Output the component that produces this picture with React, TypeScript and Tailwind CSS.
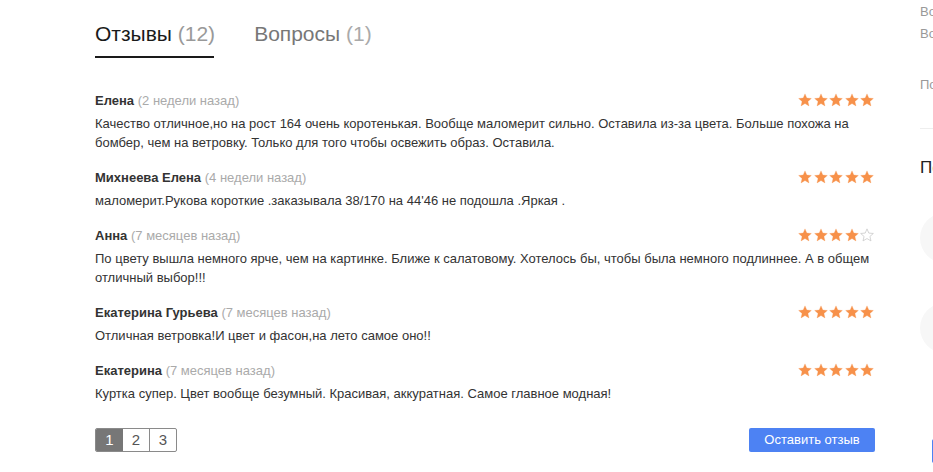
import React from "react";

const reviews = [
  {
    name: "Елена",
    date: "2 недели назад",
    rating: 5,
    text: "Качество отличное,но на рост 164 очень коротенькая. Вообще маломерит сильно. Оставила из-за цвета. Больше похожа на бомбер, чем на ветровку. Только для того чтобы освежить образ. Оставила.",
  },
  {
    name: "Михнеева Елена",
    date: "4 недели назад",
    rating: 5,
    text: "маломерит.Рукова короткие .заказывала 38/170 на 44'46 не подошла .Яркая .",
  },
  {
    name: "Анна",
    date: "7 месяцев назад",
    rating: 4,
    text: "По цвету вышла немного ярче, чем на картинке. Ближе к салатовому. Хотелось бы, чтобы была немного подлиннее. А в общем отличный выбор!!!",
  },
  {
    name: "Екатерина Гурьева",
    date: "7 месяцев назад",
    rating: 5,
    text: "Отличная ветровка!И цвет и фасон,на лето самое оно!!",
  },
  {
    name: "Екатерина",
    date: "7 месяцев назад",
    rating: 5,
    text: "Куртка супер. Цвет вообще безумный. Красивая, аккуратная. Самое главное модная!",
  },
];

function Star({ filled }: { filled: boolean }) {
  return (
    <svg width="14" height="14" viewBox="0 0 24 24">
      <path
        d="M12 1.5l3.1 7.2 7.8.7-5.9 5.1 1.8 7.6L12 18.1l-6.8 4 1.8-7.6-5.9-5.1 7.8-.7z"
        fill={filled ? "#f7914a" : "none"}
        stroke={filled ? "#f7914a" : "#c8c8c8"}
        strokeWidth={filled ? 0.5 : 1.3}
        strokeLinejoin="round"
      />
    </svg>
  );
}

function Stars({ rating }: { rating: number }) {
  return (
    <div className="flex gap-[1.5px]">
      {[0, 1, 2, 3, 4].map((i) => (
        <Star key={i} filled={i < rating} />
      ))}
    </div>
  );
}

export default function App() {
  return (
    <div
      className="w-[933px] h-[472px] overflow-hidden bg-white flex text-[#333]"
      style={{ fontFamily: '"Liberation Sans", Arial, sans-serif' }}
    >
      <div className="w-[780px] ml-[95px] shrink-0 flex flex-col">
        <div className="flex gap-[39px] pt-[20px] text-[21px] leading-[28px]">
          <div className="flex flex-col">
            <div className="text-[#1a1a1a] pb-[8px]">
              Отзывы <span className="text-[#999]">(12)</span>
            </div>
            <div className="h-[2px] bg-[#1a1a1a] w-[119px]" />
          </div>
          <div className="text-[#777]">
            Вопросы <span className="text-[#aaa]">(1)</span>
          </div>
        </div>

        <div className="flex flex-col gap-[16px] mt-[33px]">
          {reviews.map((r, i) => (
            <div key={i} className="flex flex-col">
              <div className="flex justify-between items-center h-[20px]">
                <div className="text-[13px]">
                  <span className="font-bold text-[#333]">{r.name}</span>{" "}
                  <span className="text-[#aaa]">({r.date})</span>
                </div>
                <div className="mr-[1px] -mt-[2px]">
                  <Stars rating={r.rating} />
                </div>
              </div>
              <div className="text-[13px] leading-[19px] mt-[3px] text-[#333]">
                {r.text}
              </div>
            </div>
          ))}
        </div>

        <div className="flex justify-between items-center mt-[25px]">
          <div className="flex border border-[#8a8a8a] rounded-[2px] overflow-hidden text-[15px] h-[24px]">
            <div className="w-[27px] flex items-center justify-center bg-[#777] text-white">1</div>
            <div className="w-[27px] flex items-center justify-center text-[#555] border-r border-[#8a8a8a]">2</div>
            <div className="w-[26px] flex items-center justify-center text-[#555]">3</div>
          </div>
          <div className="w-[126px] h-[24px] rounded-[2px] bg-[#4d82f3] text-white text-[13px] flex items-center justify-center">
            Оставить отзыв
          </div>
        </div>
      </div>

      <div className="ml-[45px] w-[200px] shrink-0 flex flex-col text-[13px] text-[#999]">
        <div className="mt-[1px] leading-[22px]">Вопросы</div>
        <div className="leading-[22px]">Вопросы</div>
        <div className="mt-[29px] leading-[22px]">Поделиться</div>
        <div className="mt-[32px] h-px bg-[#eee]" />
        <div className="mt-[28px] text-[17px] text-[#222] leading-[22px]">Похожие</div>
        <div className="mt-[34px] w-[50px] h-[50px] rounded-full bg-[#f7f7f7]" />
        <div className="mt-[40px] w-[50px] h-[50px] rounded-full bg-[#f7f7f7]" />
        <div className="mt-[86px] ml-[12px] w-[80px] h-[24px] bg-[#4d82f3] rounded-[2px]" />
      </div>
    </div>
  );
}
